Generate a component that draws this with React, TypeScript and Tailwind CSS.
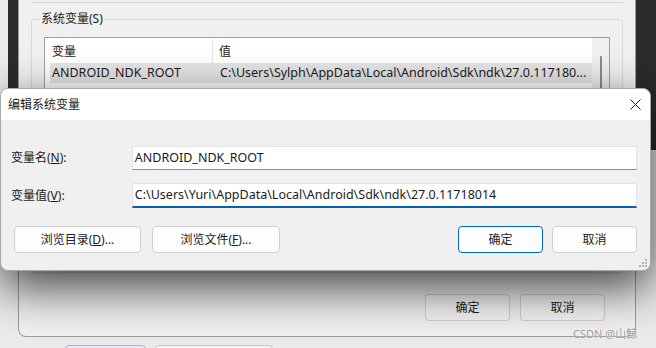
import React from "react";

const font = {
  fontFamily: "'Noto Sans', 'Noto Sans CJK SC', sans-serif",
};

function WinButton({
  label,
  className = "",
}: {
  label: React.ReactNode;
  className?: string;
}) {
  return (
    <div
      className={
        "flex items-center justify-center rounded-[4px] border text-[12px] text-[#1b1b1b] " +
        className
      }
    >
      {label}
    </div>
  );
}

function CloseIcon() {
  return (
    <svg width="11" height="11" viewBox="0 0 11 11">
      <path d="M0.5 0.5 L10.5 10.5 M10.5 0.5 L0.5 10.5" stroke="#1b1b1b" strokeWidth="1" />
    </svg>
  );
}

function Grip() {
  const dots = [
    [6, 0],
    [3, 3],
    [6, 3],
    [0, 6],
    [3, 6],
    [6, 6],
  ];
  return (
    <svg width="8" height="8" viewBox="0 0 8 8">
      {dots.map(([x, y]) => (
        <rect key={`${x}-${y}`} x={x} y={y} width="2" height="2" fill="#b4b4b4" />
      ))}
    </svg>
  );
}

function EnvWindow() {
  return (
    <div className="absolute left-[18px] top-0 w-[618px] h-[337px] rounded-b-[8px] border-x border-b border-[#9c9c9c] bg-[#f0f0f0] flex flex-col">
      {/* end of user vars group */}
      <div className="mx-[12px] h-[3px] border-b border-[#d9d9d9]" />

      {/* system vars group */}
      <div className="relative mx-[12px] mt-[16px] h-[254px] border border-[#d9d9d9] rounded-[2px] pl-[12px] pt-[17px]">
        <span className="absolute left-[8px] top-[-9px] bg-[#f0f0f0] px-[1px] text-[12px] leading-[16px] text-[#1b1b1b]">
          系统变量(S)
        </span>
        <div className="w-[566px] h-[230px] border border-[#a0a0a0] bg-white flex">
          <div className="flex-1 flex flex-col">
            <div className="h-[25px] flex text-[12px] text-[#1b1b1b] pt-[2px]">
              <div className="w-[168px] pl-[7px] flex items-center border-r border-[#e5e5e5]">变量</div>
              <div className="pl-[6px] flex items-center">值</div>
            </div>
            <div className="ml-[5px] h-[20px] bg-[#e5e5e5] flex items-center text-[12.5px] text-[#1b1b1b]">
              <div className="w-[170px] pl-[2px]">ANDROID_NDK_ROOT</div>
              <div>C:\Users\Sylph\AppData\Local\Android\Sdk\ndk\27.0.117180...</div>
            </div>
          </div>
          <div className="w-[17px] bg-[#f0f0f0] flex justify-center pt-[18px]">
            <div className="w-[2px] h-[120px] bg-[#8a8a8a] rounded-full" />
          </div>
        </div>
      </div>

      <div className="flex justify-end gap-[10px] pr-[30px] mt-[21px]">
        <WinButton label="确定" className="w-[85px] h-[27px] border-black/15 bg-white/25" />
        <WinButton label="取消" className="w-[85px] h-[27px] border-black/15 bg-white/25" />
      </div>
    </div>
  );
}

function EditDialog() {
  return (
    <div className="absolute left-0 top-[88px] w-[651px] h-[183px] rounded-[8px] border border-[#a8a8a8] bg-[#f0f0f0] overflow-hidden shadow-[0_16px_48px_rgba(0,0,0,0.75)] flex flex-col">
      <div className="h-[31px] bg-white flex items-center justify-between pl-[7px] pr-[9px]">
        <span className="text-[12px] text-[#1b1b1b]">编辑系统变量</span>
        <CloseIcon />
      </div>

      <div className="relative flex-1 flex flex-col pt-[26px] pl-[10px] pr-[13px]">
        <div className="flex items-center">
          <span className="w-[121px] text-[12px] text-[#1b1b1b]">
            变量名(<span className="underline">N</span>):
          </span>
          <div className="w-[506px] h-[24px] bg-white border border-[#e3e3e3] border-b-[#8a8a8a] flex items-center pl-[2px] text-[12.5px] text-[#1b1b1b]">
            ANDROID_NDK_ROOT
          </div>
        </div>

        <div className="flex items-center mt-[13px]">
          <span className="w-[121px] text-[12px] text-[#1b1b1b]">
            变量值(<span className="underline">V</span>):
          </span>
          <div className="w-[506px] h-[25px] bg-white border border-[#e3e3e3] border-b-2 border-b-[#005fb8] flex items-center pl-[2px] text-[12.5px] text-[#1b1b1b]">
            C:\Users\Yuri\AppData\Local\Android\Sdk\ndk\27.0.11718014
          </div>
        </div>

        <div className="flex items-center mt-[18px] pl-[3px]">
          <WinButton
            label={<>浏览目录(<span className="underline">D</span>)...</>}
            className="w-[127px] h-[27px] bg-[#fdfdfd] border-[#d0d0d0]"
          />
          <WinButton
            label={<>浏览文件(<span className="underline">F</span>)...</>}
            className="w-[128px] h-[27px] ml-[11px] bg-[#fdfdfd] border-[#d0d0d0]"
          />
          <div className="flex-1" />
          <WinButton label="确定" className="w-[85px] h-[27px] bg-[#fdfdfd] border-[#0067c0]" />
          <WinButton label="取消" className="w-[85px] h-[27px] ml-[9px] bg-[#fdfdfd] border-[#d0d0d0]" />
        </div>

        <div className="absolute right-[3px] bottom-[3px]">
          <Grip />
        </div>
      </div>
    </div>
  );
}

export default function App() {
  return (
    <div className="relative w-[656px] h-[348px] overflow-hidden bg-[#ebebeb]" style={font}>
      {/* desktop bits behind */}
      <div className="absolute left-[8px] top-0 w-[10px] h-[100px] bg-[#2b2b2b]" />
      <div className="absolute left-[635px] top-0 w-[21px] h-[150px] bg-[#2b2b2b]" />

      {/* system properties window, only the top of its buttons shows */}
      <div className="absolute left-0 top-[337px] w-[636px] h-[20px] flex pl-[65px] pt-[8px] gap-[9px]">
        <div className="w-[81px] h-[20px] rounded-[4px] border border-[#9cb8d6] bg-[#e4ebf3]" />
        <div className="w-[118px] h-[20px] rounded-[4px] border border-[#c8c8c8] bg-[#f3f3f3]" />
      </div>

      <EnvWindow />
      <EditDialog />

      <span className="absolute left-[573px] top-[326px] text-[11px] text-[#9a9a9a] [text-shadow:0_0_2px_#ffffff]">
        CSDN @山鲸
      </span>
    </div>
  );
}
